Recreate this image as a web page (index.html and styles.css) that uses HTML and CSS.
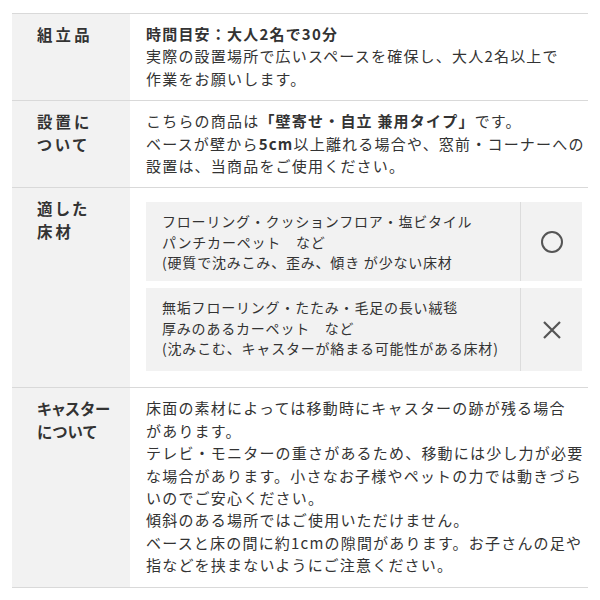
FILE: index.html
```html
<!DOCTYPE html>
<html lang="ja">
<head>
    <meta charset="UTF-8">
    <meta name="viewport" content="width=device-width, initial-scale=1.0">
    <title>商品仕様</title>
    <link rel="stylesheet" href="styles.css">
</head>
<body>
    <div class="spec">
        <div class="row">
            <div class="label">組立品</div>
            <div class="body">
                <b>時間目安：大人2名で30分</b><br>
                実際の設置場所で広いスペースを確保し、大人2名以上で<br>
                作業をお願いします。
            </div>
        </div>
        <div class="row">
            <div class="label">設置に<br>ついて</div>
            <div class="body">
                こちらの商品は<b>「壁寄せ・自立 兼用タイプ」</b>です。<br>
                ベースが壁から<b>5cm</b>以上離れる場合や、窓前・コーナーへの<br>
                設置は、当商品をご使用ください。
            </div>
        </div>
        <div class="row">
            <div class="label">適した<br>床材</div>
            <div class="body floors">
                <div class="floor">
                    <div class="floor-text">
                        フローリング・クッションフロア・塩ビタイル<br>
                        パンチカーペット　など<br>
                        (硬質で沈みこみ、歪み、傾き が少ない床材
                    </div>
                    <div class="mark">
                        <svg width="24" height="24" viewBox="0 0 24 24"><circle cx="12" cy="12" r="10" fill="none" stroke="#555" stroke-width="2"/></svg>
                    </div>
                </div>
                <div class="floor ng">
                    <div class="floor-text">
                        無垢フローリング・たたみ・毛足の長い絨毯<br>
                        厚みのあるカーペット　など<br>
                        (沈みこむ、キャスターが絡まる可能性がある床材)
                    </div>
                    <div class="mark">
                        <svg width="20" height="20" viewBox="0 0 20 20"><path d="M2 2 L18 18 M18 2 L2 18" stroke="#555" stroke-width="2.2" fill="none"/></svg>
                    </div>
                </div>
            </div>
        </div>
        <div class="row">
            <div class="label tight">キャスター<br>について</div>
            <div class="body">
                床面の素材によっては移動時にキャスターの跡が残る場合<br>
                があります。<br>
                テレビ・モニターの重さがあるため、移動には少し力が必要<br>
                な場合があります。小さなお子様やペットの力では動きづら<br>
                いのでご安心ください。<br>
                傾斜のある場所ではご使用いただけません。<br>
                ベースと床の間に約1cmの隙間があります。お子さんの足や<br>
                指などを挟まないようにご注意ください。
            </div>
        </div>
    </div>
</body>
</html>
```

FILE: styles.css
```css
*{
    padding: 0;
    margin: 0;
    box-sizing: border-box;
}
body
{
    background: #fff;
    color: #333;
    font-family: "Noto Sans CJK JP", "Noto Sans", sans-serif;
}
.spec
{
    margin: 13px 12px 0 12px;
    border-top: 1px solid #d9d9d9;
}
.row
{
    display: grid;
    grid-template-columns: 118px 1fr;
    border-bottom: 1px solid #d9d9d9;
}
.label
{
    background-color: #f2f2f2;
    padding: 9px 0 10px 25px;
    font-size: 15.4px;
    font-weight: 700;
    line-height: 22.4px;
    letter-spacing: 3.2px;
    font-feature-settings: "palt";
}
.label.tight
{
    letter-spacing: 0.6px;
}
.body
{
    padding: 9px 6px 10px 16px;
    font-size: 15px;
    line-height: 22.4px;
    letter-spacing: 1.2px;
    white-space: nowrap;
}
.body b
{
    font-weight: 700;
}
.floors
{
    display: flex;
    flex-direction: column;
    gap: 7px;
    padding-top: 14px;
    padding-bottom: 16px;
}
.floor
{
    display: flex;
    background-color: #f2f2f2;
    height: 79px;
}
.floor.ng
{
    height: 83px;
}
.floor-text
{
    flex: 1;
    padding: 9px 0 0 16px;
    font-size: 14px;
    line-height: 20.5px;
    letter-spacing: 0.8px;
}
.mark
{
    width: 62px;
    border-left: 1px solid #dcdcdc;
    display: flex;
    align-items: center;
    justify-content: center;
}
```
